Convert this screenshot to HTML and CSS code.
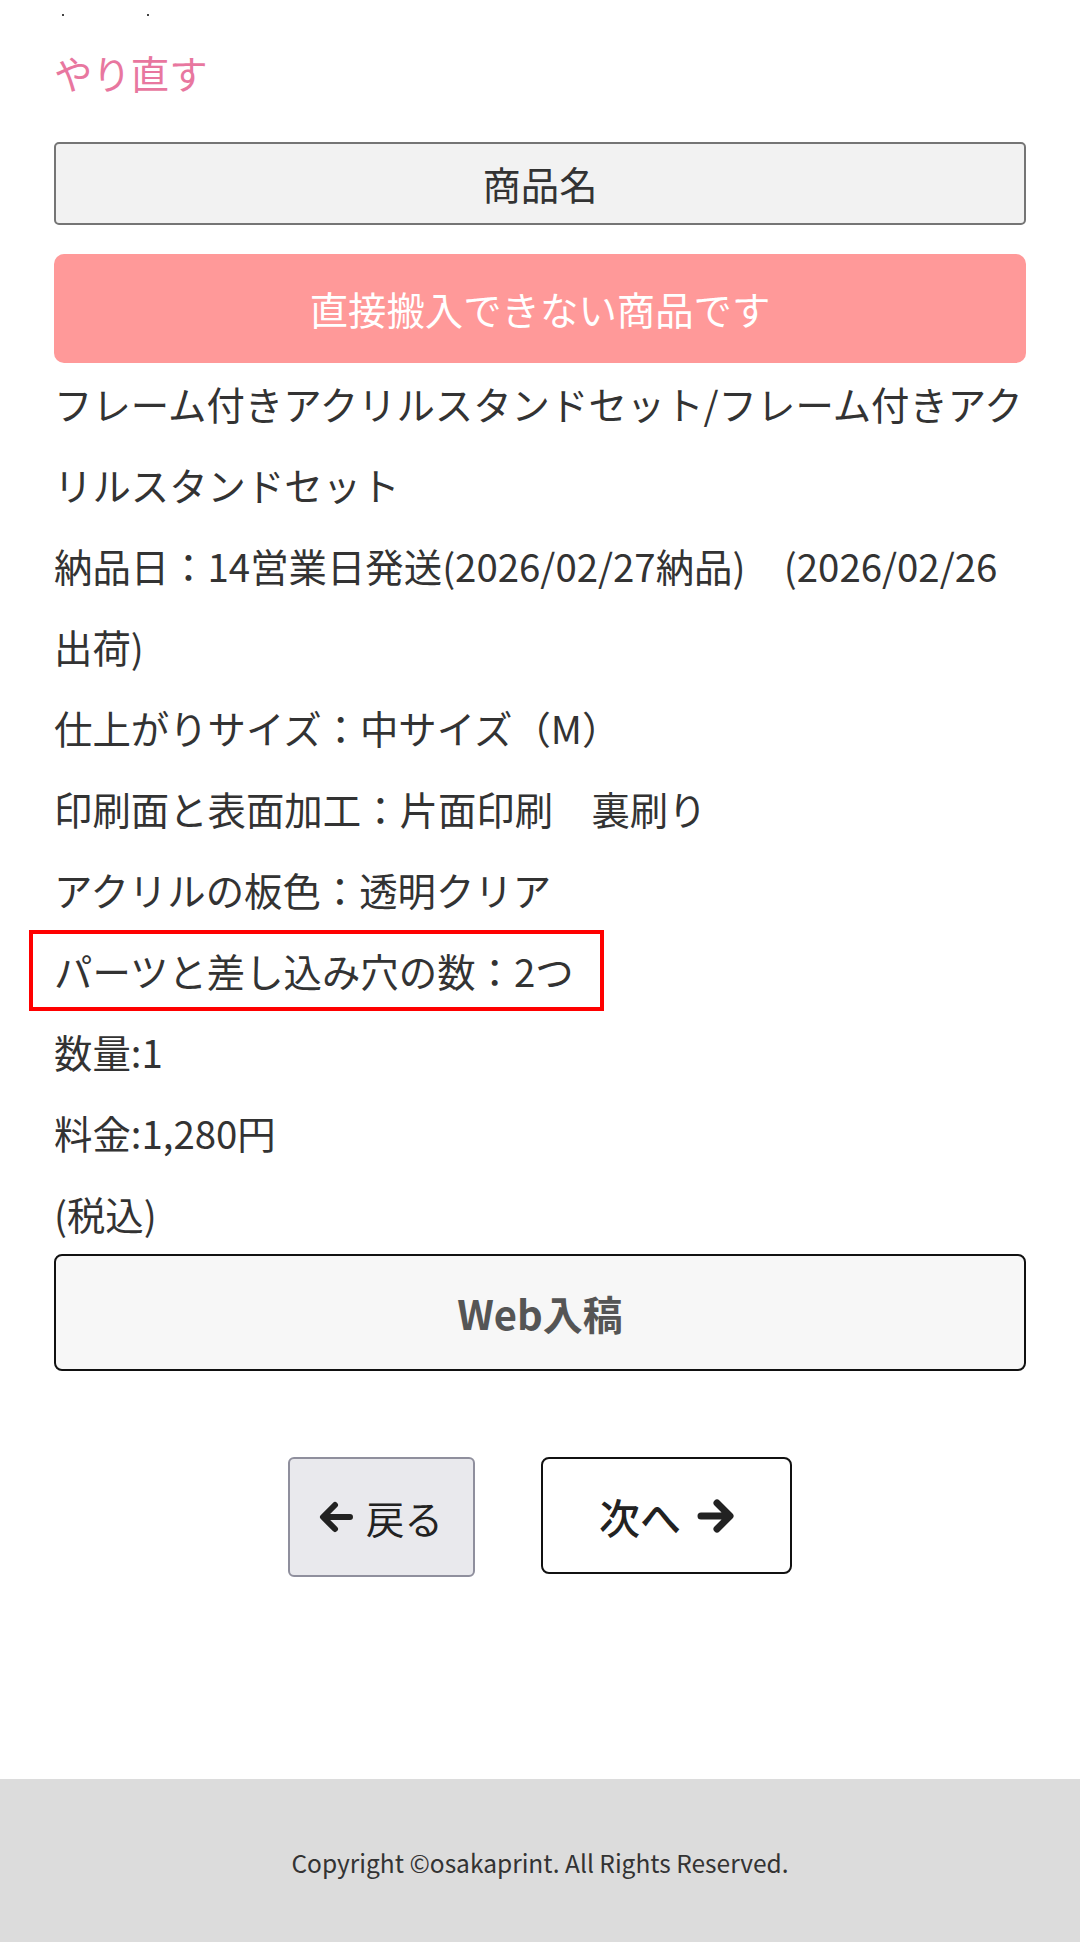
FILE: index.html
```html
<!DOCTYPE html>
<html lang="ja">
<head>
    <meta charset="UTF-8">
    <meta name="viewport" content="width=device-width, initial-scale=1.0">
    <title>カート確認</title>
    <link rel="stylesheet" href="styles.css">
</head>
<body>

    <div class="container">
        <!-- scrolled-off line above -->
        <div class="cutoff"><span></span><span></span></div>

        <a class="retry" href="#">やり直す</a>

        <div class="product-head">商品名</div>
        <div class="notice">直接搬入できない商品です</div>

        <!-- Order details -->
        <div class="details">
            <p>フレーム付きアクリルスタンドセット/フレーム付きアクリルスタンドセット</p>
            <p>納品日：14営業日発送(2026/02/27納品)　(2026/02/26出荷)</p>
            <p>仕上がりサイズ：中サイズ（M）</p>
            <p>印刷面と表面加工：片面印刷　裏刷り</p>
            <p>アクリルの板色：透明クリア</p>
            <p class="highlight">パーツと差し込み穴の数：2つ</p>
            <p>数量:1</p>
            <p>料金:1,280円</p>
            <p>(税込)</p>
        </div>

        <button class="upload-btn">Web入稿</button>

        <!-- Navigation -->
        <div class="nav-buttons">
            <button class="back-btn">
                <svg class="arrow" width="36" height="34" viewBox="0 0 36 34"><path d="M32 17H6M17 5L5 17L17 29" /></svg>
                戻る
            </button>
            <button class="next-btn">
                次へ
                <svg class="arrow arrow-next" width="38" height="36" viewBox="0 0 38 36"><path d="M4 18H32M20 5L33 18L20 31" /></svg>
            </button>
        </div>
    </div>

    <footer>
        Copyright ©osakaprint. All Rights Reserved.
    </footer>

</body>
</html>
```

FILE: styles.css
```css
body {
    font-family: "Noto Sans CJK JP", "Noto Sans", sans-serif;
    background-color: white;
    color: #333;
    margin: 0;
}
.container {
    padding: 0 54px;
}
.cutoff {
    display: flex;
    gap: 83px;
    height: 2px;
    margin-top: 14px;
    padding-left: 8px;
}
.cutoff span {
    width: 2px;
    height: 2px;
    background-color: #444;
}
.retry {
    display: block;
    margin-top: 16px;
    font-size: 38.4px;
    line-height: 81px;
    color: #e8779f;
    text-decoration: none;
}
.product-head {
    margin-top: 29px;
    background-color: #f2f2f2;
    border: 2px solid #757575;
    border-radius: 5px;
    text-align: center;
    font-size: 38.4px;
    line-height: 79px;
    color: #333;
}
.notice {
    margin-top: 29px;
    background-color: #ff9999;
    border-radius: 10px;
    text-align: center;
    font-size: 38.4px;
    line-height: 109px;
    color: white;
}
.details p {
    margin: 0;
    font-size: 38.4px;
    line-height: 81px;
}
.details p.highlight {
    width: fit-content;
    box-sizing: border-box;
    height: 81px;
    margin-left: -25px;
    padding: 0 26px 0 21px;
    border: 4px solid #ff0000;
    line-height: 73px;
}
.upload-btn {
    display: block;
    width: 100%;
    height: 117px;
    background-color: #f7f7f7;
    border: 2px solid #111;
    border-radius: 8px;
    font-family: inherit;
    font-size: 40px;
    font-weight: bold;
    color: #555;
    cursor: pointer;
}
.nav-buttons {
    display: flex;
    justify-content: center;
    gap: 66px;
    margin-top: 86px;
    margin-bottom: 202px;
}
.nav-buttons button {
    display: flex;
    align-items: center;
    font-family: inherit;
    cursor: pointer;
}
.back-btn {
    height: 120px;
    padding: 0 30px 0 28px;
    background-color: #e9e9ed;
    border: 2px solid #8f8f9d;
    border-radius: 6px;
    font-size: 38.4px;
    color: #222;
}
.back-btn .arrow {
    margin-right: 12px;
}
.next-btn {
    height: 117px;
    padding: 0 55px 0 56px;
    background-color: white;
    border: 2px solid #111;
    border-radius: 8px;
    font-size: 41px;
    font-weight: 500;
    color: #222;
}
.next-btn .arrow {
    margin-left: 16px;
}
.arrow path {
    fill: none;
    stroke: #222;
    stroke-width: 6;
    stroke-linecap: round;
    stroke-linejoin: round;
}
.arrow-next path {
    stroke-width: 7;
}
footer {
    background-color: #dcdcdc;
    color: #333;
    text-align: center;
    font-size: 24.5px;
    line-height: 36px;
    padding: 66px 0;
}
```
